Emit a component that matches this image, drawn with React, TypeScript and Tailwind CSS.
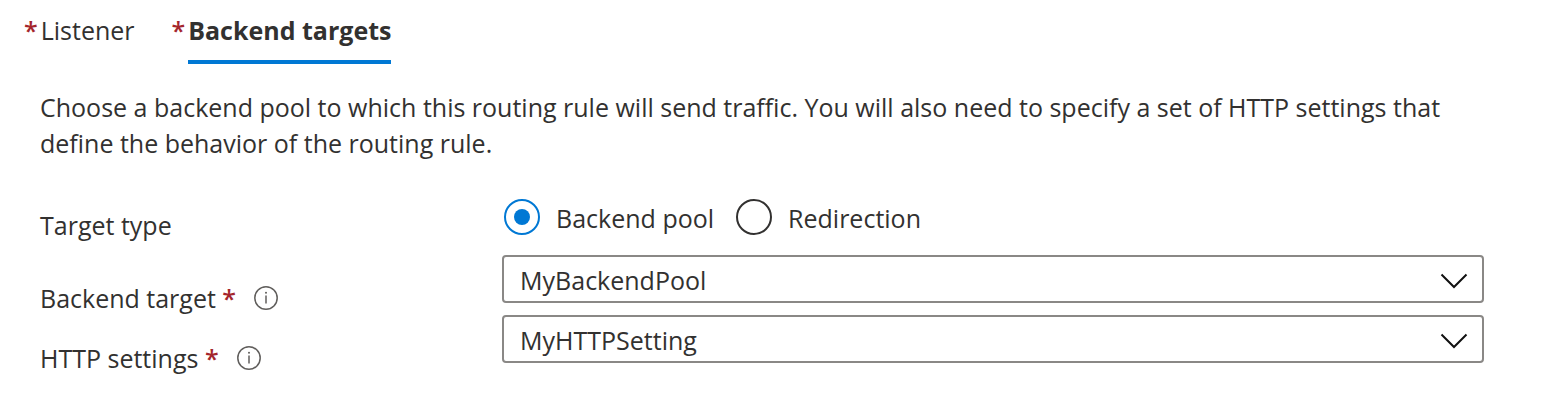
import { useState } from "react";
import type { ReactNode } from "react";

function Star() {
  return <span className="font-semibold text-[#a4262c]">*</span>;
}

function InfoButton({ label }: { label: string }) {
  return (
    <button type="button" aria-label={label} className="size-6 shrink-0">
      <svg viewBox="0 0 24 24" className="size-6" fill="none" stroke="#605e5c">
        <circle cx="12" cy="12" r="11.2" strokeWidth="1.5" />
        <path d="M12 9.5v8" strokeWidth="1.5" />
        <circle cx="12" cy="6.8" r="1" fill="#605e5c" stroke="none" />
      </svg>
    </button>
  );
}

function Tab({
  label,
  selected,
  onSelect,
}: {
  label: string;
  selected: boolean;
  onSelect: () => void;
}) {
  return (
    <button
      type="button"
      role="tab"
      aria-selected={selected}
      onClick={onSelect}
      className={selected ? "flex gap-[3px] font-bold" : "flex gap-[3px]"}
    >
      <Star />
      <span
        className={
          selected
            ? "border-b-4 border-[#0078d4] pb-3"
            : "border-b-4 border-transparent pb-3"
        }
      >
        {label}
      </span>
    </button>
  );
}

function RadioOption({
  label,
  checked,
  onChange,
}: {
  label: string;
  checked: boolean;
  onChange: () => void;
}) {
  return (
    <label className="flex items-center gap-4">
      <input
        type="radio"
        name="target-type"
        checked={checked}
        onChange={onChange}
        className="grid size-9 shrink-0 appearance-none place-items-center rounded-full border-2 border-[#323130] before:size-4 before:rounded-full checked:border-[#0078d4] checked:before:bg-[#0078d4]"
      />
      <span className="pt-0.5">{label}</span>
    </label>
  );
}

function SelectRow({
  id,
  label,
  value,
}: {
  id: string;
  label: string;
  value: string;
}) {
  return (
    <Row
      label={
        <div className="-mb-4 flex items-center gap-4.5 pt-[25px]">
          <label htmlFor={id}>
            {label} <Star />
          </label>
          <InfoButton label={"About " + label} />
        </div>
      }
    >
      <div className="grid items-center">
        <select
          id={id}
          defaultValue={value}
          className="col-start-1 row-start-1 h-12 w-full appearance-none rounded border-2 border-[#8a8886] bg-white pt-0.5 pr-14 pl-4"
        >
          <option>{value}</option>
        </select>
        <svg
          viewBox="0 0 28 16"
          aria-hidden="true"
          className="pointer-events-none col-start-1 row-start-1 mt-1 mr-4 h-4 w-7 justify-self-end"
          fill="none"
          stroke="#111"
          strokeWidth="2"
        >
          <path d="M1.5 1.5 14 14 26.5 1.5" />
        </svg>
      </div>
    </Row>
  );
}

function Row({ label, children }: { label: ReactNode; children: ReactNode }) {
  return (
    <div className="grid grid-cols-[32%_1fr] items-start">
      {label}
      {children}
    </div>
  );
}

export default function App() {
  const [tab, setTab] = useState("Backend targets");
  const [target, setTarget] = useState("Backend pool");
  return (
    <main className="bg-white pt-3 pr-[68px] pb-6 pl-10 font-['Open_Sans',sans-serif] text-[25px] leading-9 text-[#323130]">
      <div role="tablist" className="-ml-4 flex gap-[37px]">
        {["Listener", "Backend targets"].map((name) => (
          <Tab
            key={name}
            label={name}
            selected={tab === name}
            onSelect={() => setTab(name)}
          />
        ))}
      </div>
      <p className="pt-[25px]">
        Choose a backend pool to which this routing rule will send traffic. You
        will also need to specify a set of HTTP settings that define the
        behavior of the routing rule.
      </p>
      <form className="flex flex-col gap-3 pt-[37px]">
        <Row
          label={
            <span id="target-type-label" className="pt-[9px]">
              Target type
            </span>
          }
        >
          <div
            role="radiogroup"
            aria-labelledby="target-type-label"
            className="flex items-start gap-[22px] pl-0.5"
          >
            {["Backend pool", "Redirection"].map((name) => (
              <RadioOption
                key={name}
                label={name}
                checked={target === name}
                onChange={() => setTarget(name)}
              />
            ))}
          </div>
        </Row>
        <SelectRow id="backend-target" label="Backend target" value="MyBackendPool" />
        <SelectRow id="http-settings" label="HTTP settings" value="MyHTTPSetting" />
      </form>
    </main>
  );
}
